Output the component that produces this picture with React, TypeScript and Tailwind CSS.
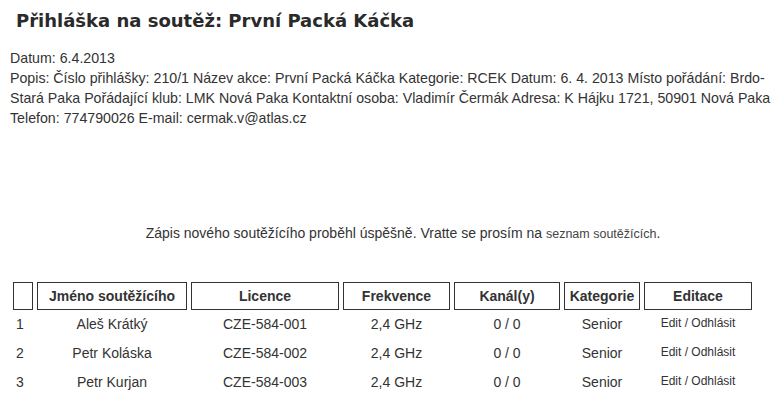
const rows = [
  { n: 1, name: 'Aleš Krátký', lic: 'CZE-584-001' },
  { n: 2, name: 'Petr Koláska', lic: 'CZE-584-002' },
  { n: 3, name: 'Petr Kurjan', lic: 'CZE-584-003' },
]

const App = () => {
  return (
    <div className="w-[778px] h-[418px] bg-white text-[#333] font-['Liberation_Sans',Arial,sans-serif] overflow-hidden">
      <h1 className="pl-[16px] pt-[9px] h-[48px] font-['DejaVu_Sans',sans-serif] font-bold text-[18px] leading-[24px] text-[#2a2a2a]">
        Přihláška na soutěž: První Packá Káčka
      </h1>

      <div className="pl-[10px] pr-[4px] text-[14.2px] leading-[20px]">
        <p>Datum: 6.4.2013</p>
        <p>
          Popis: Číslo přihlášky: 210/1 Název akce: První Packá Káčka Kategorie: RCEK Datum: 6. 4. 2013
          Místo pořádání: Brdo-Stará Paka Pořádající klub: LMK Nová Paka Kontaktní osoba: Vladimír
          Čermák Adresa: K Hájku 1721, 50901 Nová Paka Telefon: 774790026 E-mail: cermak.v@atlas.cz
        </p>
      </div>

      <p className="mt-[95px] text-center text-[14px] leading-[20px] pl-[28px]">
        Zápis nového soutěžícího proběhl úspěšně. Vratte se prosím na{' '}
        <a className="text-[12.5px] text-[#444]">seznam soutěžících</a>.
      </p>

      {/* soutezici */}
      <table className="mt-[38px] ml-[9px] border-separate border-spacing-x-[4px] border-spacing-y-0 text-[14px]">
        <thead>
          <tr className="h-[28px]">
            <th className="w-[20px] border border-[#333]"></th>
            <th className="w-[150px] border border-[#333]">Jméno soutěžícího</th>
            <th className="w-[148px] border border-[#333]">Licence</th>
            <th className="w-[107px] border border-[#333]">Frekvence</th>
            <th className="w-[106px] border border-[#333]">Kanál(y)</th>
            <th className="w-[76px] border border-[#333]">Kategorie</th>
            <th className="w-[108px] border border-[#333]">Editace</th>
          </tr>
        </thead>
        <tbody>
          {rows.map((r) => (
            <tr key={r.n} className="h-[29px]">
              <td className="pl-[3px]">{r.n}</td>
              <td className="text-center">{r.name}</td>
              <td className="text-center">{r.lic}</td>
              <td className="text-center">2,4 GHz</td>
              <td className="text-center">0 / 0</td>
              <td className="text-center">Senior</td>
              <td className="text-center text-[12px] pb-[3px]">Edit / Odhlásit</td>
            </tr>
          ))}
        </tbody>
      </table>
    </div>
  )
}

export default App
